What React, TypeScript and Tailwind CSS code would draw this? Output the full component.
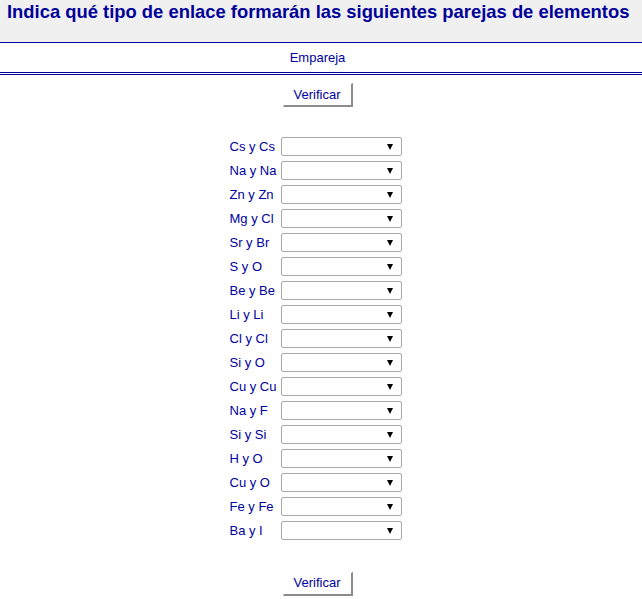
const pairs = [
  "Cs y Cs",
  "Na y Na",
  "Zn y Zn",
  "Mg y Cl",
  "Sr y Br",
  "S y O",
  "Be y Be",
  "Li y Li",
  "Cl y Cl",
  "Si y O",
  "Cu y Cu",
  "Na y F",
  "Si y Si",
  "H y O",
  "Cu y O",
  "Fe y Fe",
  "Ba y I",
];

function VerifyButton() {
  return (
    <button className="h-[24px] w-[70px] bg-white border-t border-l border-t-white border-l-white border-r-2 border-b-2 border-r-[#8c8c8c] border-b-[#8c8c8c] text-[13px] leading-[20px] text-[#0000a0]">
      Verificar
    </button>
  );
}

function FakeSelect() {
  return (
    <div className="h-[19px] w-[121px] bg-white border border-[#a9a9a9] rounded-[2px] flex items-center justify-end pr-[8px]">
      <svg width="6" height="6" viewBox="0 0 6 6">
        <polygon points="0,0 6,0 3,6" fill="#000" />
      </svg>
    </div>
  );
}

export default function App() {
  return (
    <div className="w-[642px] min-h-[599px] bg-white" style={{ fontFamily: '"Liberation Sans", Arial, sans-serif' }}>
      <div className="h-[43px] bg-[#f0f0f0] border-b border-[#000099] pl-[7px] pt-[1px]">
        <h1 className="text-[18.4px] font-bold text-[#000099] leading-[22px]">
          Indica qué tipo de enlace formarán las siguientes parejas de elementos
        </h1>
      </div>
      <div className="w-[635px] h-[29px] flex items-center justify-center text-[13px] text-[#0000a0]">
        Empareja
      </div>
      <div className="h-[3px] border-t border-b border-[#000099]" />
      <div className="w-[635px] flex flex-col items-center pt-[8px]">
        <VerifyButton />
        <div className="w-[180px] mt-[30px] flex flex-col gap-[5px]">
          {pairs.map((p) => (
            <div key={p} className="h-[19px] flex items-center">
              <span className="w-[53px] pl-[2px] text-[13px] leading-[19px] text-[#0000a0]">{p}</span>
              <FakeSelect />
            </div>
          ))}
        </div>
        <div className="mt-[30px]">
          <VerifyButton />
        </div>
      </div>
    </div>
  );
}
